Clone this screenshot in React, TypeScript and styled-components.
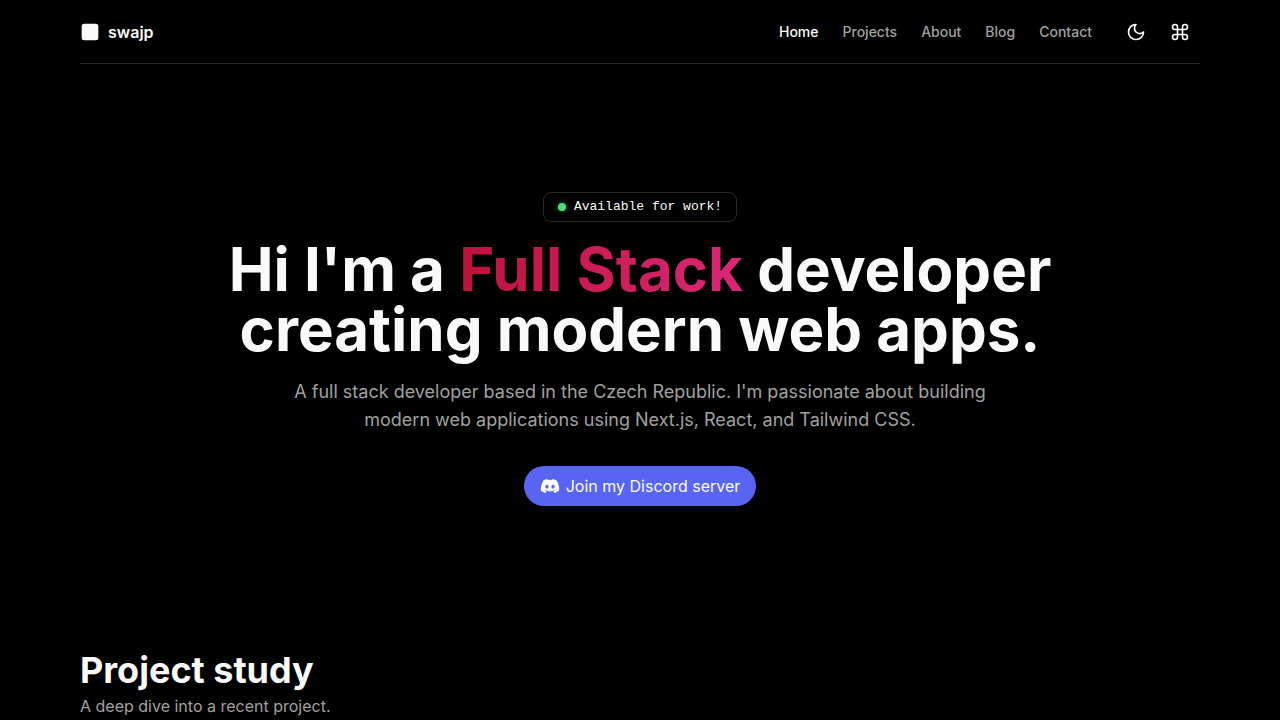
import React from "react";
import styled, { createGlobalStyle } from "styled-components";
import { Command, Square } from "lucide-react";
import { FaDiscord } from "react-icons/fa";

const GlobalStyle = createGlobalStyle`
  *, *::before, *::after { box-sizing: border-box; }
  body {
    margin: 0;
    background: #000;
    color: #fafafa;
    font-family: Inter, "Liberation Sans", sans-serif;
    font-size: 16px;
    line-height: 24px;
    overflow-x: hidden;
  }
`;

const Container = styled.div`
  max-width: 1200px;
  margin: 0 auto;
  padding: 0 40px;
`;

const Header = styled.header`
  display: flex;
  align-items: center;
  justify-content: space-between;
  height: 64px;
  border-bottom: 1px solid #27272a;
`;

const Brand = styled.a`
  display: flex;
  align-items: center;
  gap: 8px;
  color: inherit;
  font-weight: 600;
  text-decoration: none;
`;

const HeaderEnd = styled.div`
  display: flex;
  align-items: center;
  gap: 24px;
`;

const Nav = styled.nav`
  display: flex;
  gap: 24px;
`;

const NavLink = styled.a<{ $active?: boolean }>`
  color: ${({ $active }) => ($active ? "#fafafa" : "#a1a1a1")};
  font-size: 14px;
  font-weight: 500;
  line-height: 20px;
  text-decoration: none;
`;

const Actions = styled.div`
  display: flex;
  gap: 4px;
`;

const IconButton = styled.button`
  display: flex;
  align-items: center;
  justify-content: center;
  width: 40px;
  height: 40px;
  padding: 0;
  border: 0;
  border-radius: 6px;
  background: transparent;
  color: #fafafa;
  cursor: pointer;
`;

const Hero = styled.section`
  display: flex;
  flex-direction: column;
  align-items: center;
  padding: 128px 0 144px;
  text-align: center;
`;

const Badge = styled.div`
  display: flex;
  align-items: center;
  gap: 8px;
  padding: 4px 14px;
  border: 1px solid #27272a;
  border-radius: 8px;
  font-family: "Liberation Mono", monospace;
  font-size: 13px;
  line-height: 20px;
`;

const StatusDot = styled.span`
  width: 8px;
  height: 8px;
  border-radius: 50%;
  background: #4ade80;
  box-shadow: 0 0 4px 1px #14532d;
`;

const Title = styled.h1`
  max-width: 896px;
  margin: 17px 0 19px;
  font-size: 60px;
  font-weight: 700;
  line-height: 60px;
`;

const Highlight = styled.span`
  background: linear-gradient(to right, #be123c, #db2777);
  background-clip: text;
  -webkit-background-clip: text;
  color: transparent;
`;

const Lead = styled.p`
  max-width: 720px;
  margin: 0 0 32px;
  color: #a1a1a1;
  font-size: 18px;
  line-height: 28px;
`;

const DiscordLink = styled.a`
  display: flex;
  align-items: center;
  gap: 6px;
  height: 40px;
  padding: 0 16px;
  border-radius: 20px;
  background: #5865f2;
  color: #fafafa;
  text-decoration: none;
`;

const SectionTitle = styled.h2`
  margin: 0;
  font-size: 36px;
  font-weight: 700;
  line-height: 40px;
`;

const SectionText = styled.p`
  margin: 4px 0 24px;
  color: #a1a1a1;
`;

const links = ["Home", "Projects", "About", "Blog", "Contact"];

function MoonIcon() {
  return (
    <svg
      width="20"
      height="20"
      viewBox="0 0 24 24"
      fill="none"
      stroke="currentColor"
      strokeWidth="2"
      strokeLinecap="round"
      strokeLinejoin="round"
      aria-hidden="true"
    >
      <path d="M12 3a6 6 0 0 0 9 9 9 9 0 1 1-9-9Z" />
    </svg>
  );
}

export default function App() {
  return (
    <>
      <GlobalStyle />
      <Container>
        <Header>
          <Brand href="#">
            <Square size={20} fill="currentColor" aria-hidden="true" />
            swajp
          </Brand>
          <HeaderEnd>
            <Nav aria-label="Main">
              {links.map((label, i) => (
                <NavLink key={label} href={`#${label.toLowerCase()}`} $active={i === 0}>
                  {label}
                </NavLink>
              ))}
            </Nav>
            <Actions>
              <IconButton type="button" aria-label="Toggle theme">
                <MoonIcon />
              </IconButton>
              <IconButton type="button" aria-label="Open command menu">
                <Command size={20} aria-hidden="true" />
              </IconButton>
            </Actions>
          </HeaderEnd>
        </Header>
        <main>
          <Hero>
            <Badge>
              <StatusDot />
              Available for work!
            </Badge>
            <Title>
              Hi I'm a <Highlight>Full Stack</Highlight> developer creating modern web apps.
            </Title>
            <Lead>
              A full stack developer based in the Czech Republic. I'm passionate about building
              modern web applications using Next.js, React, and Tailwind CSS.
            </Lead>
            <DiscordLink href="#discord">
              <FaDiscord size={20} aria-hidden="true" />
              Join my Discord server
            </DiscordLink>
          </Hero>
          <section>
            <SectionTitle>Project study</SectionTitle>
            <SectionText>A deep dive into a recent project.</SectionText>
          </section>
        </main>
      </Container>
    </>
  );
}
